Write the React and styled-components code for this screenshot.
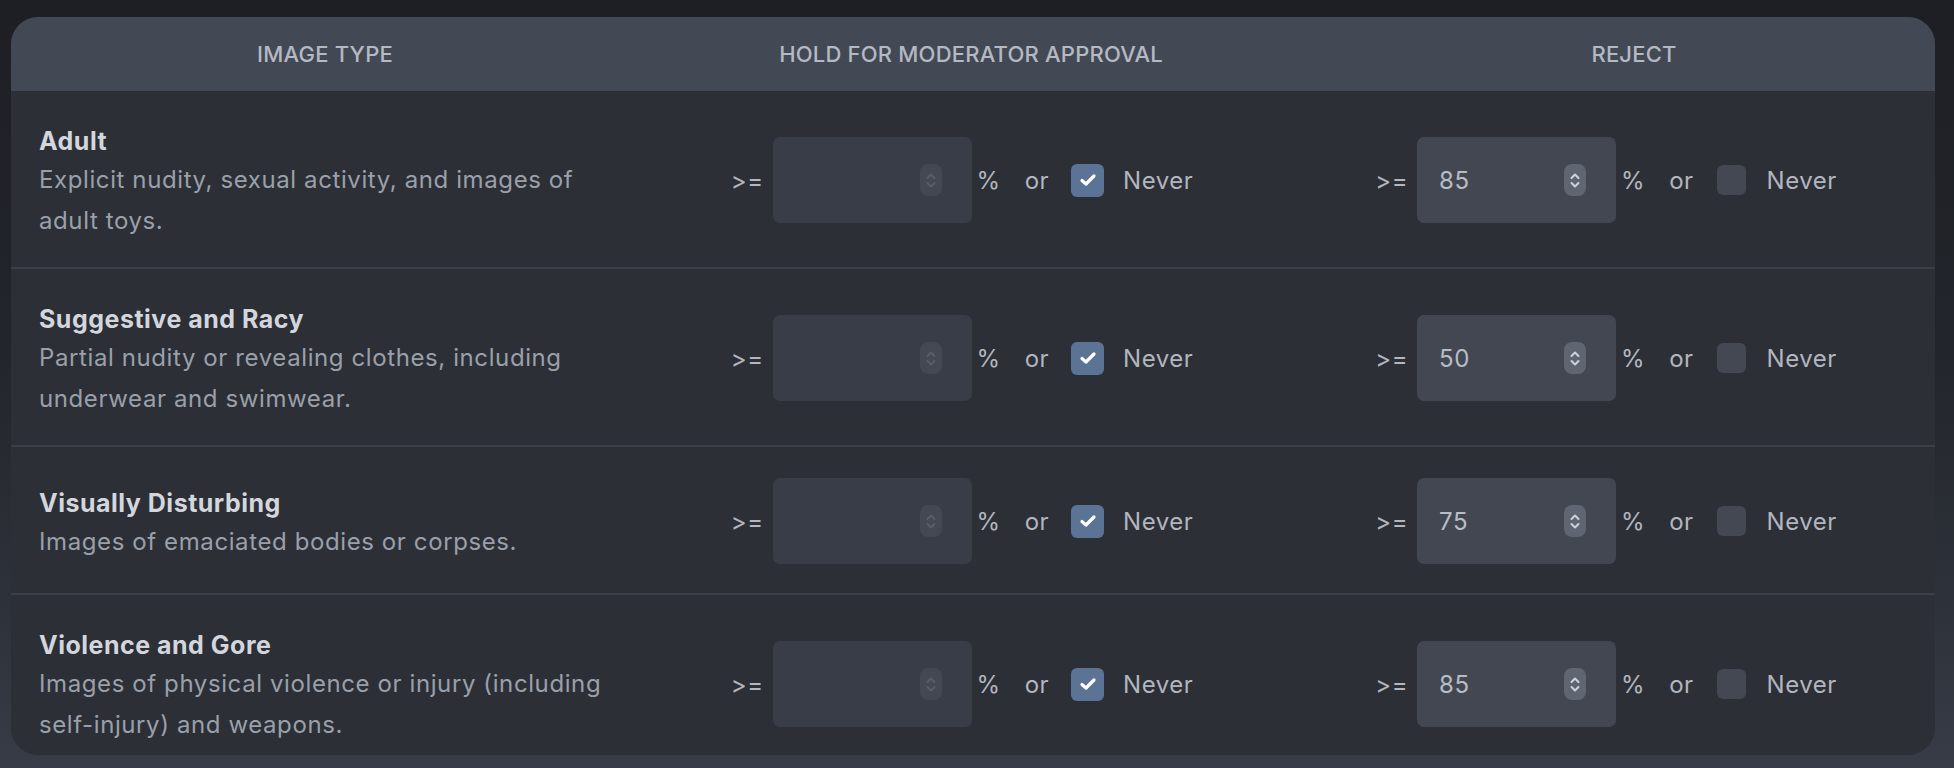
import React from 'react';
import styled, { createGlobalStyle } from 'styled-components';

const GlobalStyle = createGlobalStyle`
  html, body {
    margin: 0;
    padding: 0;
  }
  body {
    background: linear-gradient(180deg, #1d1f24 0%, #22252b 45%, #2e323a 80%, #373c47 100%);
    font-family: Inter, 'Liberation Sans', Arial, sans-serif;
    -webkit-font-smoothing: antialiased;
  }
`

const Page = styled.div`
  height: 768px;
  box-sizing: border-box;
  padding: 17px 19px 13px 11px;
`

const Card = styled.div`
  height: 738px;
  border-radius: 27px;
  overflow: hidden;
  background: #2c2f36;
`

const cols = '628px 646px 1fr'

const HeaderRow = styled.div`
  display: grid;
  grid-template-columns: ${cols};
  align-items: center;
  height: 74px;
  background: #434954;
`

const HeaderCell = styled.div`
  text-align: center;
  padding-left: ${p => p.$shift || 0}px;
  font-size: 22px;
  font-weight: 500;
  color: #b4b9c3;
  text-transform: uppercase;
  letter-spacing: 0.2px;
`

const Row = styled.div`
  display: grid;
  grid-template-columns: ${cols};
  align-items: center;
  box-sizing: border-box;
  min-height: 148px;
  padding: 28px 0 26px;
  border-top: ${p => p.$first ? 'none' : '2px solid #3a3f48'};
`

const TypeCell = styled.div`
  padding: 7px 0 0 28px;
`

const Title = styled.div`
  font-size: 25px;
  font-weight: 700;
  line-height: 30px;
  margin-bottom: 3px;
  letter-spacing: 0.5px;
  color: #d3d6dc;
`

const Desc = styled.div`
  font-size: 24px;
  line-height: 41px;
  letter-spacing: 0.6px;
  color: #9aa0aa;
`

const Controls = styled.div`
  display: flex;
  align-items: center;
  justify-content: center;
  padding-right: ${p => p.$pad || 0}px;
  font-size: 24px;
  letter-spacing: 0.5px;
  color: #b2b6be;
`

const Label = styled.span`
  margin-left: ${p => p.$gap || 0}px;
`

const NumberBox = styled.div`
  display: flex;
  align-items: center;
  justify-content: space-between;
  box-sizing: border-box;
  width: 199px;
  height: 86px;
  margin: 0 5px 0 9px;
  padding: 0 30px 0 22px;
  border-radius: 7px;
  background: ${p => p.$disabled ? '#393d47' : '#424752'};
  color: #b8bcc4;
  font-size: 24px;
`

const Spinner = styled.div`
  display: flex;
  flex-direction: column;
  align-items: center;
  justify-content: center;
  gap: 1px;
  width: 22px;
  height: 32px;
  border-radius: 8px;
  background: ${p => p.$disabled ? '#434853' : '#5f6571'};
  color: ${p => p.$disabled ? '#585e69' : '#cfd2d8'};
`

const Check = styled.div`
  display: flex;
  align-items: center;
  justify-content: center;
  width: ${p => p.$on ? 33 : 29}px;
  height: ${p => p.$on ? 33 : 30}px;
  margin: 0 ${p => p.$on ? 19 : 21}px 0 ${p => p.$on ? 22 : 23}px;
  border-radius: 6px;
  background: ${p => p.$on ? '#5b7496' : '#434853'};
`

const Chevron = ({ up }) => (
  <svg width="12" height="8" viewBox="0 0 12 8" fill="none">
    <path d={up ? 'M2.5 6 L6 2.5 L9.5 6' : 'M2.5 2 L6 5.5 L9.5 2'} stroke="currentColor" strokeWidth="2" strokeLinecap="round" strokeLinejoin="round" />
  </svg>
)

const Threshold = ({ value, never, pad }) => (
  <Controls $pad={pad}>
    <span>&gt;=</span>
    <NumberBox $disabled={never}>
      <span>{value}</span>
      <Spinner $disabled={never}>
        <Chevron up />
        <Chevron />
      </Spinner>
    </NumberBox>
    <span>%</span>
    <Label $gap={24}>or</Label>
    <Check $on={never}>
      {never && (
        <svg width="18" height="14" viewBox="0 0 18 14" fill="none">
          <path d="M3 7.5 L7 11 L15 3" stroke="#ffffff" strokeWidth="3.2" strokeLinecap="round" strokeLinejoin="round" />
        </svg>
      )}
    </Check>
    <span>Never</span>
  </Controls>
)

const types = [
  { title: 'Adult', desc: ['Explicit nudity, sexual activity, and images of', 'adult toys.'], reject: '85' },
  { title: 'Suggestive and Racy', desc: ['Partial nudity or revealing clothes, including', 'underwear and swimwear.'], reject: '50' },
  { title: 'Visually Disturbing', desc: ['Images of emaciated bodies or corpses.'], reject: '75' },
  { title: 'Violence and Gore', desc: ['Images of physical violence or injury (including', 'self-injury) and weapons.'], reject: '85' },
]

export default function App() {
  return (
    <Page>
      <GlobalStyle />
      <Card>
        <HeaderRow>
          <HeaderCell>Image Type</HeaderCell>
          <HeaderCell $shift={18}>Hold for moderator approval</HeaderCell>
          <HeaderCell $shift={48}>Reject</HeaderCell>
        </HeaderRow>
        {types.map((t, i) => (
          <Row key={t.title} $first={i === 0}>
            <TypeCell>
              <Title>{t.title}</Title>
              {t.desc.map(line => <Desc key={line}>{line}</Desc>)}
            </TypeCell>
            <Threshold value="" never />
            <Threshold value={t.reject} never={false} pad={8} />
          </Row>
        ))}
      </Card>
    </Page>
  )
}
